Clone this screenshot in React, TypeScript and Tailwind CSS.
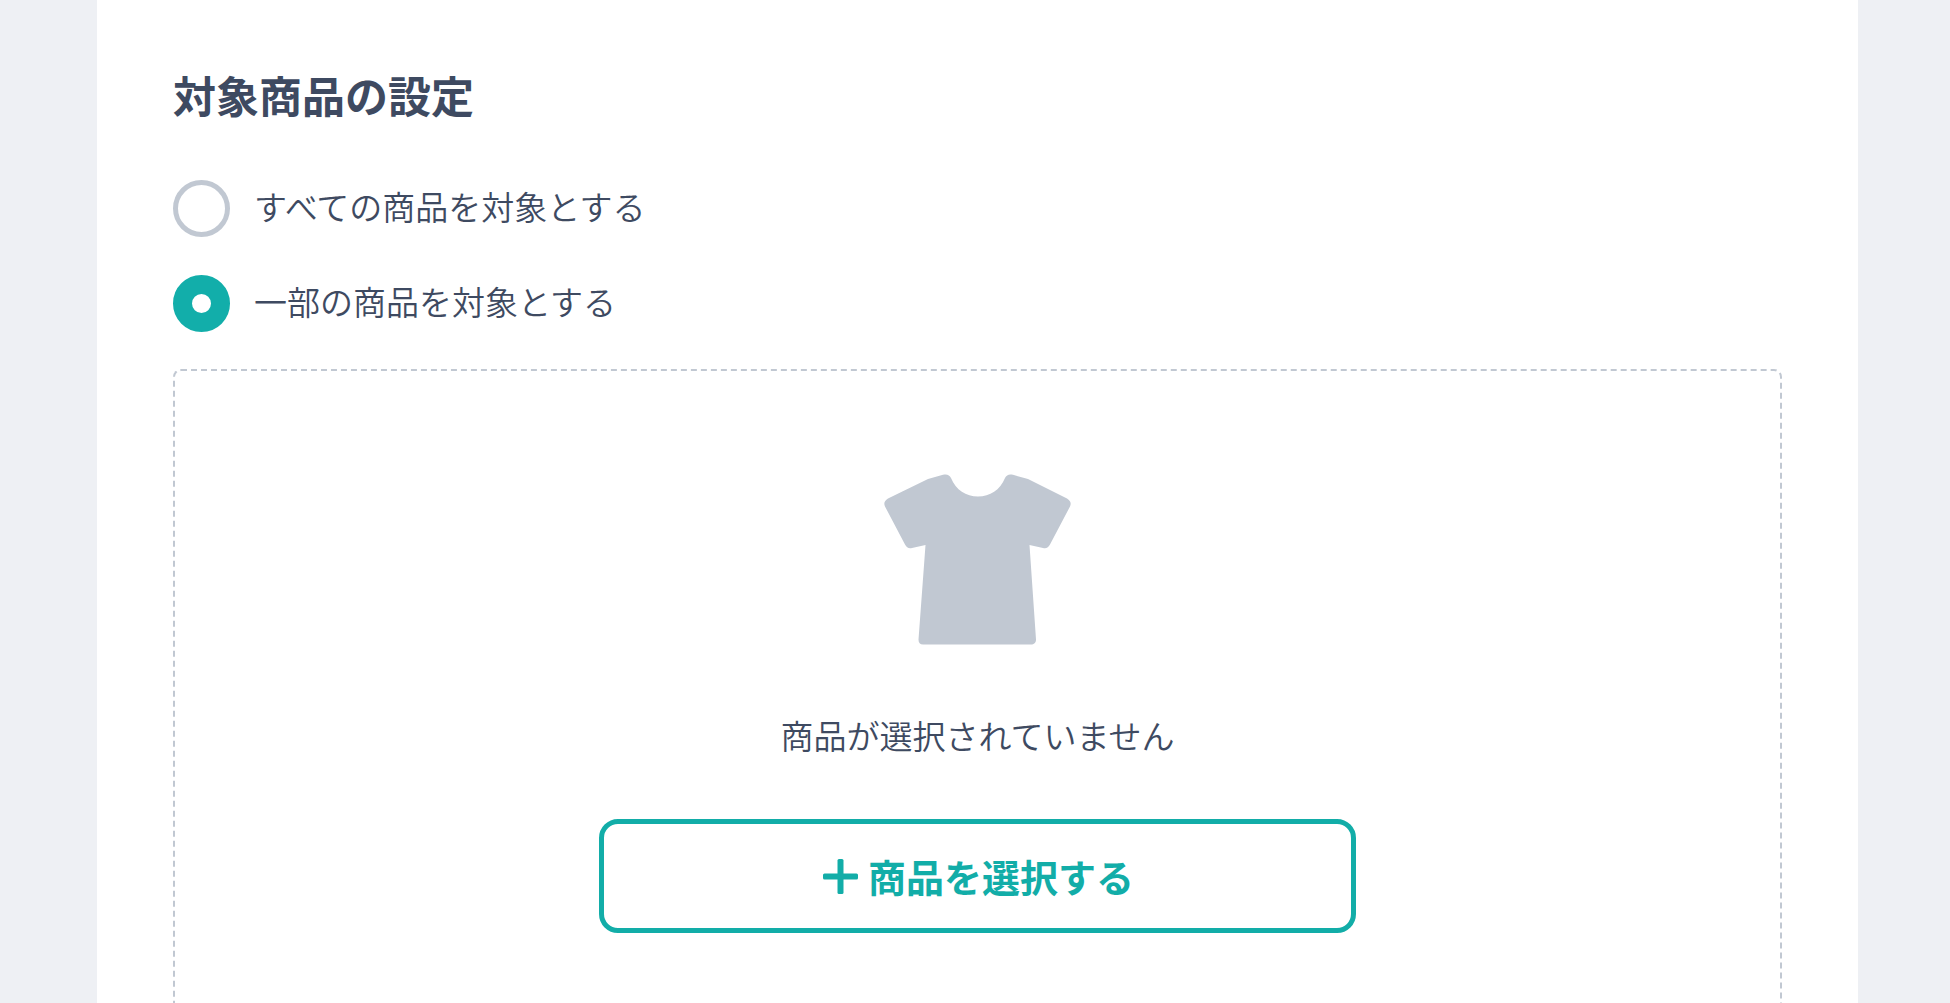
import { useState } from "react";

const OPTIONS = [
  { value: "all", label: "すべての商品を対象とする" },
  { value: "some", label: "一部の商品を対象とする" },
];

function TShirtIcon() {
  return (
    <svg viewBox="0 0 188 172" className="h-[172px] w-[188px] fill-[#c1c8d2]" aria-hidden="true">
      <path d="M44 5 L59 0.800 C63 -0.300 65.500 1 67 4 C72 16 82 22.500 94 22.500 C106 22.500 116 16 121 4 C122.500 1 125 -0.300 129 0.800 L144 5 L183 24.500 C186.500 26.500 187.500 29.500 186 32.500 L166 70.500 C164.500 73.500 162 75 159 74 L145.500 71 L152 165.500 C152 169 150 170.500 147 170.500 L39 170.500 C36 170.500 34.500 169 34.500 165.500 L41.500 71 L28 74 C25 75 22.500 73.500 21 70.500 L1 32.500 C-0.500 29.500 0.500 26.500 4 24.500 Z" />
    </svg>
  );
}

function PlusIcon() {
  return (
    <svg viewBox="0 0 35 35" className="size-[35px] fill-current" aria-hidden="true">
      <rect x="0" y="14.500" width="35" height="6" rx="1.500" />
      <rect x="14.500" y="0" width="6" height="35" rx="1.500" />
    </svg>
  );
}

export default function App() {
  const [target, setTarget] = useState("some");

  return (
    <div className="h-screen overflow-y-auto bg-[#eef0f4] pr-[92px] pl-[97px] font-['Noto_Sans_CJK_JP',sans-serif] text-[#3e4a61] [scrollbar-width:none]">
      <main className="bg-white px-[76px] pt-[62px] pb-[76px]">
        <h1 id="target-heading" className="text-[43px] leading-[64px] font-bold">
          対象商品の設定
        </h1>

        <div role="radiogroup" aria-labelledby="target-heading" className="mt-[54px] flex flex-col gap-[38px]">
          {OPTIONS.map((option) => (
            <label key={option.value} className="flex items-center gap-6 self-start">
              <input
                type="radio"
                name="target"
                value={option.value}
                checked={target === option.value}
                onChange={() => setTarget(option.value)}
                className="size-[57px] shrink-0 appearance-none rounded-full border-5 border-[#c1c8d2] bg-white checked:border-[19px] checked:border-[#12aeaa]"
              />
              <span className="pb-1.5 text-[33px] leading-[48px] font-[350]">{option.label}</span>
            </label>
          ))}
        </div>

        <section className="mt-[37px] flex flex-col items-center rounded-lg border-2 border-dashed border-[#c1c8d2] px-6 pt-[103px] pb-[95px]">
          <TShirtIcon />
          <p className="mt-[65px] text-[33px] leading-[48px] font-[350]">商品が選択されていません</p>
          <button
            type="button"
            className="mt-[60px] flex h-[114px] w-full max-w-[757px] items-center justify-center gap-2.5 rounded-[19px] border-5 border-[#12ada8] pl-0.5 text-[38px] leading-[56px] font-bold text-[#12ada8]"
          >
            <PlusIcon />
            商品を選択する
          </button>
        </section>
      </main>
    </div>
  );
}
